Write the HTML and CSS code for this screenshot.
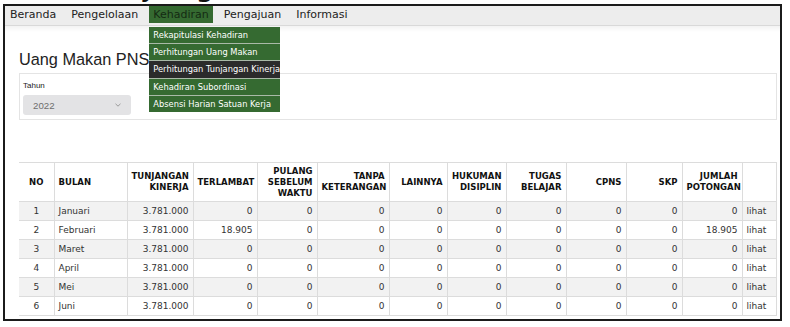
FILE: index.html
```html
<!DOCTYPE html>
<html lang="id">
<head>
<meta charset="utf-8">
<title>Uang Makan PNS</title>
<link rel="stylesheet" href="styles.css">
</head>
<body>
<div class="topclip"><span class="topclip-text">yang</span></div>
<div class="frame">
  <nav class="menubar">
    <div class="menu-item">Beranda</div>
    <div class="menu-item">Pengelolaan</div>
    <div class="menu-item menu-item-active">Kehadiran
      <ul class="dropdown">
        <li class="dropdown-item">Rekapitulasi Kehadiran</li>
        <li class="dropdown-item">Perhitungan Uang Makan</li>
        <li class="dropdown-item dropdown-item-hover">Perhitungan Tunjangan Kinerja</li>
        <li class="dropdown-item">Kehadiran Subordinasi</li>
        <li class="dropdown-item">Absensi Harian Satuan Kerja</li>
      </ul>
    </div>
    <div class="menu-item">Pengajuan</div>
    <div class="menu-item">Informasi</div>
  </nav>
  <main class="content">
    <h1 class="page-title">Uang Makan PNS</h1>
    <div class="filter-panel">
      <div class="filter-label">Tahun</div>
      <div class="select">
        <span class="select-value">2022</span>
        <svg class="select-chevron" width="6" height="4" viewBox="0 0 6 4"><path d="M0.5 0.8 L3 3.2 L5.5 0.8" fill="none" stroke="#9a9a9a" stroke-width="1"/></svg>
      </div>
    </div>
    <table class="data-table">
      <colgroup>
        <col style="width:35px"><col style="width:73px"><col style="width:66px"><col style="width:64px"><col style="width:60px"><col style="width:72px"><col style="width:58px"><col style="width:59px"><col style="width:60px"><col style="width:60px"><col style="width:56px"><col style="width:60px"><col style="width:34px">
      </colgroup>
      <thead>
        <tr>
          <th class="c">NO</th>
          <th class="l">BULAN</th>
          <th>TUNJANGAN<br>KINERJA</th>
          <th>TERLAMBAT</th>
          <th>PULANG<br>SEBELUM<br>WAKTU</th>
          <th>TANPA<br>KETERANGAN</th>
          <th>LAINNYA</th>
          <th>HUKUMAN<br>DISIPLIN</th>
          <th>TUGAS<br>BELAJAR</th>
          <th>CPNS</th>
          <th>SKP</th>
          <th>JUMLAH<br>POTONGAN</th>
          <th></th>
        </tr>
      </thead>
      <tbody>
        <tr><td class="c">1</td><td class="l">Januari</td><td>3.781.000</td><td>0</td><td>0</td><td>0</td><td>0</td><td>0</td><td>0</td><td>0</td><td>0</td><td>0</td><td class="l">lihat</td></tr>
        <tr><td class="c">2</td><td class="l">Februari</td><td>3.781.000</td><td>18.905</td><td>0</td><td>0</td><td>0</td><td>0</td><td>0</td><td>0</td><td>0</td><td>18.905</td><td class="l">lihat</td></tr>
        <tr><td class="c">3</td><td class="l">Maret</td><td>3.781.000</td><td>0</td><td>0</td><td>0</td><td>0</td><td>0</td><td>0</td><td>0</td><td>0</td><td>0</td><td class="l">lihat</td></tr>
        <tr><td class="c">4</td><td class="l">April</td><td>3.781.000</td><td>0</td><td>0</td><td>0</td><td>0</td><td>0</td><td>0</td><td>0</td><td>0</td><td>0</td><td class="l">lihat</td></tr>
        <tr><td class="c">5</td><td class="l">Mei</td><td>3.781.000</td><td>0</td><td>0</td><td>0</td><td>0</td><td>0</td><td>0</td><td>0</td><td>0</td><td>0</td><td class="l">lihat</td></tr>
        <tr><td class="c">6</td><td class="l">Juni</td><td>3.781.000</td><td>0</td><td>0</td><td>0</td><td>0</td><td>0</td><td>0</td><td>0</td><td>0</td><td>0</td><td class="l">lihat</td></tr>
      </tbody>
    </table>
  </main>
</div>
</body>
</html>
```
FILE: styles.css
```css
html, body {
  margin: 0;
  padding: 0;
  background: #ffffff;
}
body {
  font-family: "DejaVu Sans", Verdana, sans-serif;
  color: #222;
  width: 790px;
  height: 327px;
  overflow: hidden;
}
.topclip {
  height: 4px;
  overflow: hidden;
  padding-left: 140px;
}
.topclip-text {
  display: block;
  font-size: 30px;
  line-height: 30px;
  margin-top: -29px;
  color: #111;
}
.frame {
  box-sizing: border-box;
  margin-left: 3px;
  width: 779px;
  height: 317px;
  border: 2px solid #1b1b1b;
  overflow: hidden;
  position: relative;
  background: #fff;
}
.menubar {
  display: flex;
  align-items: flex-start;
  gap: 7px;
  height: 19px;
  padding-left: 1px;
  background: #ededed;
  border-bottom: 1px solid #d9d9d9;
  font-size: 11px;
}
.menu-item {
  position: relative;
  padding: 0 4px;
  line-height: 17px;
  color: #222;
  white-space: nowrap;
}
.menu-item-active {
  background: #356a31;
  color: #142b13;
}
.dropdown {
  position: absolute;
  left: 0;
  top: 21px;
  width: 131px;
  margin: 0;
  padding: 0;
  list-style: none;
  z-index: 5;
  overflow: hidden;
}
.dropdown-item {
  height: 16.2px;
  line-height: 16.2px;
  padding-left: 4px;
  font-size: 8.3px;
  color: #fff;
  background: #356a31;
  white-space: nowrap;
  overflow: hidden;
}
.dropdown-item + .dropdown-item {
  border-top: 1px solid #a9b9a7;
}
.dropdown-item-hover {
  background: #2b2b2b;
}
.content {
  padding: 0 3px 0 14px;
  background: linear-gradient(#f3f3f3, #ffffff 6px);
}
.page-title {
  margin: 0;
  padding-top: 22.5px;
  font-family: "Liberation Sans", Arial, sans-serif;
  font-weight: normal;
  font-size: 16.3px;
  line-height: 20px;
  color: #222;
}
.filter-panel {
  margin-top: 4.5px;
  height: 45px;
  border: 1px solid #e4e4e4;
  padding: 7px 0 0 3px;
  box-sizing: border-box;
  height: 47px;
}
.filter-label {
  font-family: "Liberation Sans", Arial, sans-serif;
  font-size: 8px;
  line-height: 10px;
  color: #222;
}
.select {
  margin-top: 4px;
  width: 108px;
  height: 20px;
  box-sizing: border-box;
  border-radius: 3px;
  background: #e3e3e5;
  display: flex;
  align-items: center;
  justify-content: space-between;
  padding: 0 10px 0 10px;
}
.select-value {
  font-family: "Liberation Sans", Arial, sans-serif;
  font-size: 9.7px;
  color: #6e6e6e;
}
.data-table {
  margin-top: 42px;
  width: 757px;
  table-layout: fixed;
  border-collapse: collapse;
  font-size: 9px;
  color: #333;
}
.data-table th,
.data-table td {
  border-right: 1px solid #dcdcdc;
  border-bottom: 1px solid #dcdcdc;
  padding: 0 4px;
  text-align: right;
  vertical-align: middle;
  white-space: nowrap;
  overflow: hidden;
}
.data-table thead tr {
  border-top: 1px solid #dcdcdc;
}
.data-table th {
  height: 38px;
  font-size: 8.5px;
  line-height: 11px;
  font-weight: bold;
  color: #111;
}
.data-table td {
  height: 18px;
  line-height: 18px;
}
.data-table tbody tr:nth-child(odd) td {
  background: #f2f2f2;
}
.data-table .c {
  text-align: center;
}
.data-table .l {
  text-align: left;
}
```
